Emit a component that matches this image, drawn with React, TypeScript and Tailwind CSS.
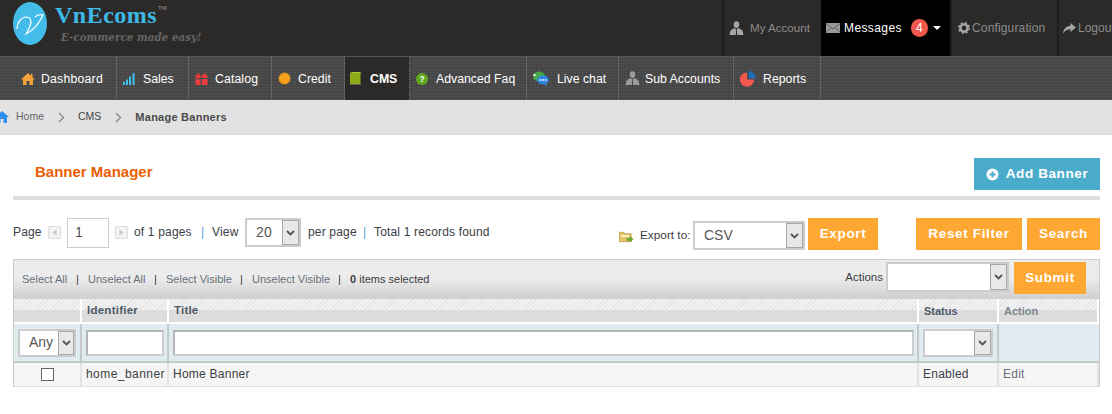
import React from "react";

const navTexture =
  "bg-[#484848] bg-[repeating-linear-gradient(0deg,rgba(255,255,255,0.035)_0_1px,transparent_1px_3px),repeating-linear-gradient(90deg,rgba(0,0,0,0.07)_0_1px,transparent_1px_4px)]";

function Person({ c = "#9a9a9a", s = 15 }: { c?: string; s?: number }) {
  return (
    <svg width={s} height={s} viewBox="0 0 15 15" className="shrink-0">
      <ellipse cx="7.5" cy="3.6" rx="2.8" ry="3.4" fill={c} />
      <path d="M5.2 7 L1.5 9.5 L0.5 14 L6.8 14 L7.2 8.5 L7.8 8.5 L8.2 14 L14.5 14 L13.5 9.5 L9.8 7 L7.5 8.5 Z" fill={c} />
    </svg>
  );
}

const burst = Array.from({ length: 28 }, (_, i) => {
  const r = i % 2 === 0 ? 6.5 : 5.2;
  const a = (i / 28) * Math.PI * 2;
  return `${(6.5 + r * Math.cos(a)).toFixed(2)},${(6.5 + r * Math.sin(a)).toFixed(2)}`;
}).join(" ");

const icons: Record<string, React.ReactNode> = {
  home: (
    <svg width="14" height="14" viewBox="0 0 14 14">
      <path d="M7 1 L10 3.8 L10 1.8 L11.5 1.8 L11.5 5.2 L14 7.5 L12 7.5 L12 13 L8.5 13 L8.5 9 L5.5 9 L5.5 13 L2 13 L2 7.5 L0 7.5 Z" fill="#f6a33a" />
    </svg>
  ),
  sales: (
    <svg width="12" height="14" viewBox="0 0 12 14">
      <rect x="0" y="10" width="2" height="3" fill="#3fc0ee" />
      <rect x="3" y="7.5" width="2" height="5.5" fill="#3fc0ee" />
      <rect x="6" y="4.5" width="2" height="8.5" fill="#3fc0ee" />
      <rect x="9.5" y="1" width="2" height="12" fill="#3fc0ee" />
    </svg>
  ),
  catalog: (
    <svg width="13" height="14" viewBox="0 0 13 14">
      <rect x="0.5" y="3" width="12" height="10" fill="#ee3b3b" />
      <rect x="0" y="6" width="13" height="1.2" fill="#4a4a4a" />
      <rect x="5.6" y="3" width="1.4" height="10" fill="#4a4a4a" />
      <path d="M2 0.5 L6 3 L3 3 Z M11 0.5 L7 3 L10 3 Z" fill="#ee3b3b" />
    </svg>
  ),
  credit: (
    <svg width="13" height="13" viewBox="0 0 13 13">
      <polygon points={burst} fill="#f7a11a" />
    </svg>
  ),
  cms: (
    <svg width="11" height="13" viewBox="0 0 11 13">
      <rect x="0" y="1" width="10.5" height="12" fill="#8cab16" />
      <rect x="0" y="12" width="10.5" height="1" fill="#666" />
      <path d="M0 1 L2 0 L11 0 L10.5 1 Z" fill="#a9c743" />
    </svg>
  ),
  faq: (
    <svg width="12" height="12" viewBox="0 0 12 12">
      <circle cx="6" cy="6" r="6" fill="#5fa81f" />
      <text x="6" y="9" textAnchor="middle" fontSize="8.5" fontWeight="700" fill="#fff" fontFamily="Liberation Sans">?</text>
    </svg>
  ),
  chat: (
    <svg width="16" height="16" viewBox="0 0 16 16">
      <ellipse cx="6" cy="5.5" rx="6" ry="5" fill="#46a546" />
      <ellipse cx="10" cy="9" rx="6" ry="4.4" fill="#2f86e0" />
      <path d="M11 13 L14 15.5 L13.5 12 Z" fill="#2f86e0" />
      <rect x="6.5" y="8.2" width="1.6" height="1.6" fill="#fff" />
      <rect x="9.2" y="8.2" width="1.6" height="1.6" fill="#fff" />
      <rect x="11.9" y="8.2" width="1.6" height="1.6" fill="#fff" />
      <rect x="0.5" y="3" width="2" height="2" fill="#fff" />
    </svg>
  ),
  reports: (
    <svg width="16" height="16" viewBox="0 0 16 16">
      <path d="M7 1.4 L7 8.6 L14.2 8.6 A7.2 7.2 0 1 1 7 1.4 Z" fill="#f2584c" />
      <path d="M8.4 0 A7.6 7.6 0 0 1 16 7.4 L8.4 7.4 Z" fill="#1f6fb5" />
    </svg>
  ),
};

const navItems = [
  { t: "Dashboard", i: icons.home, cls: "w-[117px] pl-[21px] gap-[6px] tracking-[0.2px]" },
  { t: "Sales", i: icons.sales, cls: "w-[72px] pl-[6px] gap-[8px]" },
  { t: "Catalog", i: icons.catalog, cls: "w-[83px] pl-[6px] gap-[7px] tracking-[0.1px]" },
  { t: "Credit", i: icons.credit, cls: "w-[73px] pl-[6px] gap-[7px]" },
  { t: "CMS", i: icons.cms, cls: "w-[65px] pl-[5px] gap-[9px] bg-[#2b2a29] font-bold" },
  { t: "Advanced Faq", i: icons.faq, cls: "w-[117px] pl-[6px] gap-[8px]" },
  { t: "Live chat", i: icons.chat, cls: "w-[92px] pl-[6px] gap-[8px]" },
  { t: "Sub Accounts", i: <Person />, cls: "w-[115px] pl-[6px] gap-[5px]" },
  { t: "Reports", i: icons.reports, cls: "w-[87px] pl-[6px] gap-[7px]" },
];

function Chevron() {
  return (
    <svg width="7" height="11" viewBox="0 0 7 11" className="shrink-0">
      <path d="M1 1 L5.5 5.5 L1 10" fill="none" stroke="#8a8a8a" strokeWidth="1.4" />
    </svg>
  );
}

function Select({ value, cls, arrow = "w-[17px]" }: { value?: string; cls: string; arrow?: string }) {
  return (
    <div className={"flex shrink-0 border-2 border-[#ccc] bg-white text-[14px] text-[#555] " + cls}>
      <div className="flex-1 flex items-center pl-[9px] overflow-hidden">{value}</div>
      <div className={"flex items-center justify-center border border-[#a8a8a8] bg-[#e8e8e8] " + arrow}>
        <svg width="9" height="6" viewBox="0 0 9 6">
          <path d="M1 1 L4.5 4.5 L8 1" fill="none" stroke="#555" strokeWidth="1.8" />
        </svg>
      </div>
    </div>
  );
}

function OrangeBtn({ label, cls }: { label: string; cls: string }) {
  return (
    <div className={"flex shrink-0 items-center justify-center bg-[#ffa733] pt-[1px] text-white font-bold text-[13.5px] tracking-[0.65px] " + cls}>
      {label}
    </div>
  );
}

function Pager({ dir }: { dir: "l" | "r" }) {
  return (
    <div className="flex h-[13px] w-[13px] shrink-0 items-center justify-center rounded-[1px] border border-[#ddd] bg-[#f3f3f3]">
      <svg width="5" height="7" viewBox="0 0 5 7">
        <path d={dir === "l" ? "M4.5 0 L0.5 3.5 L4.5 7 Z" : "M0.5 0 L4.5 3.5 L0.5 7 Z"} fill="#ccc" />
      </svg>
    </div>
  );
}

const hatch =
  "bg-[linear-gradient(to_bottom,transparent_50%,#dcdcdc_50%),repeating-linear-gradient(135deg,#e4e4e4_0_1px,#f2f2f2_1px_3px)]";
const headCell = "flex items-center pl-[5px] pt-[1px] border-r-2 border-white font-bold text-[#4d5a66]";
const filterBg =
  "bg-[#d6e5e9] bg-[repeating-linear-gradient(0deg,rgba(255,255,255,0.25)_0_1px,transparent_1px_2px),repeating-linear-gradient(90deg,rgba(255,255,255,0.25)_0_1px,transparent_1px_2px)]";
const filterCell = "flex items-center border-r-2 border-[#c4c9ca]";
const rowCell = "flex items-center pl-[4px] pb-[2px] border-r-2 border-[#e3e3e3] text-[12px] tracking-[0.25px] text-[#3c3c44]";
const inputCls = "h-[26px] border-2 border-[#b5b5b5] border-b-[#ccc] border-r-[#ccc] bg-white";

export default function App() {
  return (
    <div className="h-[414px] w-[1112px] overflow-hidden bg-white font-['Liberation_Sans',Arial,sans-serif] text-[12px] text-[#3c3c44]">
      {/* Top bar */}
      <header className="flex h-[56px] items-stretch bg-[#2b2a29]">
        <div className="flex w-[722px] shrink-0 items-start pl-[13px] pt-[2px]">
          <svg width="34" height="43" viewBox="0 0 34 43" className="shrink-0">
            <ellipse cx="17" cy="21.5" rx="17" ry="21.5" fill="#43bce9" />
            <path d="M4 27 C4 20 9 15 13 15 C18 15 19 19 17 24 C16 27 14 30 13 32 C17 30 25 24 30 13 C27 12 24 13 22 15" fill="none" stroke="#fff" strokeWidth="1.2" />
          </svg>
          <div className="relative ml-[8px] flex flex-col">
            <span className="font-['Liberation_Serif',serif] text-[24px] leading-[26px] font-bold tracking-[0.5px] text-[#3db9e8]">VnEcoms</span>
            <span className="absolute left-[103px] top-[2px] text-[6px] font-bold text-[#777]">TM</span>
            <span className="ml-[6px] mt-[3px] font-['DejaVu_Serif',serif] text-[10.2px] leading-[12px] italic font-bold tracking-[0.1px] text-[#666] whitespace-nowrap">E-commerce made easy!</span>
          </div>
        </div>
        <div className="flex w-[99px] shrink-0 items-center gap-[6px] border-l-2 border-[#1d1d1c] pl-[5px] text-[11.6px] text-[#8d8d8d]">
          <Person c="#a5a5a5" />
          <span>My Account</span>
        </div>
        <div className="flex w-[129px] shrink-0 items-center bg-black pl-[5px] text-white">
          <svg width="14" height="10" viewBox="0 0 14 10" className="shrink-0">
            <rect width="14" height="10" fill="#9a9a9a" />
            <path d="M0 0.5 L7 6 L14 0.5 M0 9.5 L5 4.5 M14 9.5 L9 4.5" fill="none" stroke="#555" strokeWidth="0.8" />
          </svg>
          <span className="ml-[4px] tracking-[0.4px]">Messages</span>
          <span className="ml-[9px] flex h-[18px] w-[17px] items-center justify-center rounded-full bg-[#f2584c] text-[12px] leading-none">4</span>
          <svg width="8" height="4" viewBox="0 0 8 4" className="ml-[5px]">
            <path d="M0 0 L8 0 L4 4 Z" fill="#fff" />
          </svg>
        </div>
        <div className="flex w-[107px] shrink-0 items-center border-l-2 border-[#1d1d1c] pl-[6px] tracking-[0.15px] text-[#8d8d8d]">
          <svg width="12" height="12" viewBox="0 0 12 12" className="shrink-0">
            <circle cx="6" cy="6" r="3.6" fill="none" stroke="#a5a5a5" strokeWidth="2.4" />
            <circle cx="6" cy="6" r="5.2" fill="none" stroke="#a5a5a5" strokeWidth="1.6" strokeDasharray="2.2 1.9" />
          </svg>
          <span className="ml-[2px]">Configuration</span>
        </div>
        <div className="flex min-w-0 flex-1 items-center gap-[2px] overflow-hidden border-l-2 border-[#1d1d1c] pl-[4px] text-[#8d8d8d] whitespace-nowrap">
          <svg width="13" height="11" viewBox="0 0 13 11" className="shrink-0">
            <path d="M7.5 0 L13 4.5 L7.5 9 L7.5 6.2 C4.5 6.2 2 7.5 0 10.5 C0.5 6 3.5 3 7.5 2.8 Z" fill="#a5a5a5" />
          </svg>
          <span>Logout</span>
        </div>
      </header>

      {/* Nav */}
      <nav className={"flex h-[44px] items-stretch border-t border-[#555] text-[12.3px] text-white " + navTexture}>
        {navItems.map((n) => (
          <div key={n.t} className={"flex items-center border-r border-dotted border-[#7d7d7d] whitespace-nowrap " + n.cls}>
            <span className="flex shrink-0 items-center">{n.i}</span>
            <span className="mt-[1px]">{n.t}</span>
          </div>
        ))}
      </nav>

      {/* Breadcrumb */}
      <div className="flex h-[35px] items-center overflow-hidden border-b border-[#dcdcdc] bg-[#e2e2e2] text-[10.5px]">
        <svg width="14" height="12" viewBox="0 0 14 12" className="-ml-[5px] shrink-0">
          <path d="M7 0 L14 6 L12 6 L12 12 L8.5 12 L8.5 8 L5.5 8 L5.5 12 L2 12 L2 6 L0 6 Z" fill="#2e8ff0" />
        </svg>
        <span className="ml-[7px] text-[#666]">Home</span>
        <span className="ml-[14px]"><Chevron /></span>
        <span className="ml-[13px] text-[#444]">CMS</span>
        <span className="ml-[14px]"><Chevron /></span>
        <span className="ml-[13px] text-[11px] tracking-[0.25px] font-bold text-[#4a4a4a]">Manage Banners</span>
      </div>

      {/* Content */}
      <main className="w-[1087px] ml-[13px]">
        <div className="flex h-[65px] items-stretch border-b-4 border-[#dedede] pt-[23px]">
          <h1 className="ml-[22px] mt-[5px] text-[15px] leading-[18px] font-bold text-[#ec5e02]">Banner Manager</h1>
          <div className="ml-auto flex h-[32px] w-[126px] items-center justify-center gap-[7px] bg-[#4aacca] text-[13.5px] font-bold tracking-[0.6px] text-white">
            <svg width="13" height="13" viewBox="0 0 13 13">
              <circle cx="6.5" cy="6.5" r="6" fill="#fff" />
              <path d="M6.5 3.5 L6.5 9.5 M3.5 6.5 L9.5 6.5" stroke="#4aacca" strokeWidth="2" />
            </svg>
            <span>Add Banner</span>
          </div>
        </div>

        {/* Pager row */}
        <div className="mt-[18px] flex h-[32px] items-start">
          <div className="flex h-[29px] items-center whitespace-nowrap tracking-[0.17px]">
            <span className="w-[35px] pb-[2px]">Page</span>
            <Pager dir="l" />
            <div className="mx-[6px] flex h-[30px] w-[42px] shrink-0 items-center border border-[#ccc] pl-[7px] text-[14px] text-[#555]">1</div>
            <Pager dir="r" />
            <span className="ml-[6px] w-[67px] pb-[2px]">of 1 pages</span>
            <span className="w-[10px] pb-[2px] text-[#5a9fd4]">|</span>
            <span className="ml-[1px] w-[33px] pb-[2px]">View</span>
            <Select value="20" cls="h-[29px] w-[56px]" />
            <span className="ml-[7px] w-[55px] pb-[2px]">per page</span>
            <span className="w-[11px] pb-[2px] text-[#5a9fd4]">|</span>
            <span className="pb-[2px]">Total 1 records found</span>
          </div>
          <div className="ml-auto flex h-[32px] items-start">
            <svg width="15" height="14" viewBox="0 0 16 14" className="mt-[12px] shrink-0">
              <path d="M0 2 L5 2 L6 3.5 L13 3.5 L13 12 L0 12 Z" fill="#e8c468" stroke="#b0913f" strokeWidth="0.7" />
              <rect x="2" y="5" width="9" height="2" fill="#fff2c0" />
              <path d="M8 8 L11.5 8 L11.5 6 L15.5 9.5 L11.5 13 L11.5 11 L8 11 Z" fill="#6ba83a" />
            </svg>
            <span className="ml-[6px] mt-[10px] w-[53px] whitespace-nowrap text-[11.8px] leading-[14px]">Export to:</span>
            <Select value="CSV" cls="mt-[3px] h-[29px] w-[112px]" />
            <OrangeBtn label="Export" cls="ml-[3px] h-[32px] w-[70px]" />
            <OrangeBtn label="Reset Filter" cls="ml-[38px] h-[32px] w-[106px]" />
            <OrangeBtn label="Search" cls="ml-[5px] h-[32px] w-[73px]" />
          </div>
        </div>

        {/* Toolbar */}
        <div className="mt-[9px] flex h-[40px] items-start border border-[#ccc] border-b-0 bg-[linear-gradient(to_bottom,#ececec_0%,#ececec_45%,#cfcfcf_100%)] pl-[8px]">
          <div className="flex h-[38px] items-center whitespace-nowrap text-[11px]">
            <span className="text-[#66707a] w-[46px]">Select All</span>
            <span className="w-[20px] pl-[8px]">|</span>
            <span className="text-[#66707a] w-[58px]">Unselect All</span>
            <span className="w-[20px] pl-[8px]">|</span>
            <span className="text-[#66707a] w-[66px]">Select Visible</span>
            <span className="w-[20px] pl-[8px]">|</span>
            <span className="text-[#66707a] w-[78px]">Unselect Visible</span>
            <span className="w-[20px] pl-[8px]">|</span>
            <span><b>0</b> items selected</span>
          </div>
          <div className="ml-auto mr-[13px] mt-[2px] flex items-start">
            <span className="mr-[3px] mt-[7px] text-[11.5px]">Actions</span>
            <Select cls="h-[30px] w-[123px]" />
            <OrangeBtn label="Submit" cls="ml-[5px] h-[32px] w-[72px]" />
          </div>
        </div>

        {/* Grid */}
        <div className="border-x border-[#ccc] border-b border-b-[#e0e0e0]">
          <div className={"grid h-[25px] grid-cols-[68px_87px_750px_80px_1fr] border-b-2 border-white " + hatch}>
            <div className={headCell} />
            <div className={headCell + " text-[11.5px] tracking-[0.25px]"}>Identifier</div>
            <div className={headCell + " text-[11.5px] tracking-[0.2px]"}>Title</div>
            <div className={headCell + " text-[11px]"}>Status</div>
            <div className={headCell + " text-[11px] text-[#7a868e] border-r-0"}>Action</div>
          </div>
          <div className={"grid h-[39px] grid-cols-[68px_87px_750px_80px_1fr] border-b-2 border-[#c4c9ca] " + filterBg}>
            <div className={filterCell + " pl-[4px]"}>
              <Select value="Any" cls="h-[28px] w-[58px]" arrow="w-[16px]" />
            </div>
            <div className={filterCell + " pl-[4px]"}>
              <div className={inputCls + " w-[78px]"} />
            </div>
            <div className={filterCell + " pl-[4px]"}>
              <div className={inputCls + " w-[741px]"} />
            </div>
            <div className={filterCell + " pl-[4px]"}>
              <Select cls="h-[28px] w-[70px]" />
            </div>
            <div />
          </div>
          <div className="grid h-[23px] grid-cols-[68px_87px_750px_80px_1fr] bg-[#f5f5f5]">
            <div className="flex items-center justify-center border-r-2 border-[#e3e3e3]">
              <span className="h-[13px] w-[13px] border border-[#666] bg-white" />
            </div>
            <div className={rowCell + " tracking-[0.45px]"}>home_banner</div>
            <div className={rowCell + " pl-[3px]"}>Home Banner</div>
            <div className={rowCell + " pl-[4px]"}>Enabled</div>
            <div className={rowCell + " border-r-0 pl-[3px] text-[#66707a]"}>Edit</div>
          </div>
        </div>
      </main>
    </div>
  );
}
